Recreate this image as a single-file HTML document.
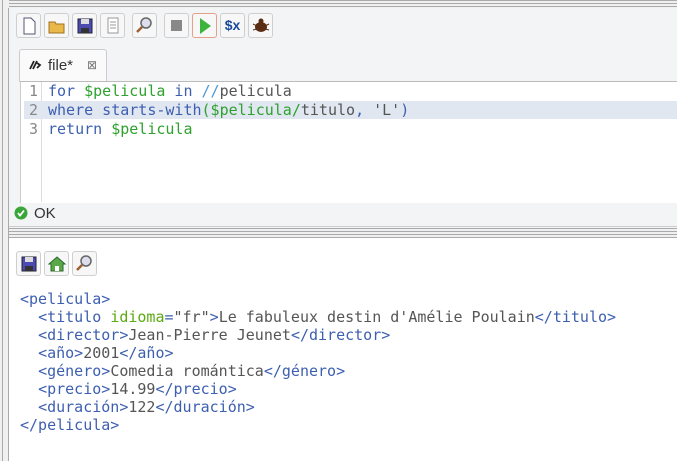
<!DOCTYPE html>
<html><head><style>
body{margin:0;width:677px;height:461px;background:#fff;position:relative;overflow:hidden;font-family:"Liberation Sans",sans-serif}
.a{position:absolute}
.btn{position:absolute;top:13px;width:23px;height:23px;border:1px solid #cfcfcf;border-radius:3px;background:#f7f7f7}
.mono{font-family:"DejaVu Sans Mono",monospace;font-size:15px;white-space:pre}
.k{color:#3d5fb0}.v{color:#2ea12e}.s{color:#4a9ad8}.t{color:#555}
.g{color:#3d5fb0}.x{color:#555}.at{color:#5aaa10}
</style></head><body>
<div class="a" style="left:0;top:0;width:677px;height:8px;background:repeating-linear-gradient(#aaa 0 1px,#f0f0f0 1px 3px)"></div>
<div class="a" style="left:0;top:0;width:9px;height:461px;background:#f0f0f0"></div>
<div class="a" style="left:2px;top:0;width:1px;height:461px;background:#aaa"></div>
<div class="a" style="left:8px;top:8px;width:1px;height:453px;background:#aaa"></div>
<div class="a" style="left:9px;top:8px;width:668px;height:220px;background:#f3f4f6"></div>
<div class="a" style="left:9px;top:228px;width:668px;height:10px;background:repeating-linear-gradient(#aaa 0 1px,#f0f0f0 1px 3px)"></div>
<div class="btn" style="left:16px"><svg width="23" height="23"><path d="M7 4h7l4 4v12H7z" fill="#fff" stroke="#557"/></svg></div>
<div class="btn" style="left:44px"><svg width="23" height="23"><path d="M4 8h6l1 2h8v9H4z" fill="#e8b84a" stroke="#a07020"/></svg></div>
<div class="btn" style="left:72px"><svg width="23" height="23"><rect x="5" y="5" width="14" height="14" fill="#4a4ab0" stroke="#223"/><rect x="8" y="5" width="8" height="5" fill="#ddd"/><rect x="8" y="14" width="8" height="5" fill="#333"/></svg></div>
<div class="btn" style="left:100px"><svg width="23" height="23"><rect x="7" y="4" width="10" height="15" fill="#fff" stroke="#999"/><path d="M9 8h6M9 11h6M9 14h6" stroke="#999"/></svg></div>
<div class="btn" style="left:132px"><svg width="23" height="23"><circle cx="13" cy="9" r="5" fill="#dde" stroke="#666" stroke-width="1.5"/><path d="M9 13l-5 5" stroke="#a06030" stroke-width="2.5"/></svg></div>
<div class="btn" style="left:164px"><svg width="23" height="23"><rect x="6" y="6" width="11" height="11" fill="#888"/></svg></div>
<div class="btn" style="left:192px;border-color:#e5a08a"><svg width="23" height="23"><path d="M7 4l11 8-11 8z" fill="#3cb43c"/></svg></div>
<div class="btn" style="left:220px;font:bold 14px 'Liberation Sans';color:#1a4a9a;text-align:center;line-height:23px">$x</div>
<div class="btn" style="left:248px"><svg width="23" height="23"><ellipse cx="12" cy="13" rx="6" ry="5" fill="#5a2c14"/><circle cx="12" cy="7" r="2.5" fill="#5a2c14"/><path d="M4 10l4 2M4 16l4-1M20 10l-4 2M20 16l-4-1" stroke="#5a2c14"/></svg></div>
<div class="a" style="left:19px;top:49px;width:86px;height:32px;background:#fafafa;border:1px solid #ccc;border-bottom:none;border-radius:3px 3px 0 0"></div>
<svg class="a" style="left:28px;top:59px" width="14" height="12"><path d="M2 10l4-8M5 10l4-8M9 4l3 2-3 3" stroke="#222" stroke-width="1.8" fill="none"/></svg>
<div class="a" style="left:48px;top:57px;font-size:15px;color:#333">file*</div>
<div class="a" style="left:87px;top:58px;font-size:12px;color:#777">⊠</div>
<div class="a" style="left:20px;top:81px;width:657px;height:121px;background:#fff;border-top:1px solid #bbb;border-left:1px solid #ccc"></div>
<div class="a" style="left:41px;top:82px;width:1px;height:120px;background:#ddd"></div>
<div class="a" style="left:24px;top:101px;width:653px;height:18px;background:#e0e7f1"></div>
<div class="a mono" style="left:29px;top:82px;line-height:19px;color:#888">1
2
3</div>
<div class="a mono" style="left:48px;top:82px;line-height:19px"><span class="k">for </span><span class="v">$pelicula</span><span class="k"> in </span><span class="s">//</span><span class="t">pelicula</span>
<span class="k">where starts-with</span><span class="v">($pelicula/</span><span class="t">titulo</span><span class="k">, </span><span class="t">'L'</span><span class="k">)</span>
<span class="k">return </span><span class="v">$pelicula</span></div>
<div class="a" style="left:9px;top:226px;width:668px;height:1px;background:#ccc"></div>
<svg class="a" style="left:14px;top:206px" width="14" height="14"><circle cx="7" cy="7" r="6.5" fill="#3aa63a"/><path d="M4 7l2 2.5 4-5" stroke="#fff" stroke-width="1.8" fill="none"/></svg>
<div class="a" style="left:34px;top:205px;font-size:15px;color:#333">OK</div>
<div class="btn" style="left:16px;top:251px"><svg width="23" height="23"><rect x="5" y="5" width="14" height="14" fill="#4a4ab0" stroke="#223"/><rect x="8" y="5" width="8" height="5" fill="#ddd"/><rect x="8" y="14" width="8" height="5" fill="#333"/></svg></div>
<div class="btn" style="left:44px;top:251px"><svg width="23" height="23"><path d="M4 12l8-7 8 7h-2v7H6v-7z" fill="#5aa84a" stroke="#2a6a2a"/><rect x="10" y="14" width="4" height="5" fill="#fff"/></svg></div>
<div class="btn" style="left:72px;top:251px"><svg width="23" height="23"><circle cx="13" cy="9" r="5" fill="#dde" stroke="#666" stroke-width="1.5"/><path d="M9 13l-5 5" stroke="#a06030" stroke-width="2.5"/></svg></div>
<div class="a mono" style="left:20px;top:290px;line-height:18px"><span class="g">&lt;pelicula&gt;</span>
  <span class="g">&lt;titulo </span><span class="at">idioma</span><span class="g">=</span><span class="x">"fr"</span><span class="g">&gt;</span><span class="x">Le fabuleux destin d'Amélie Poulain</span><span class="g">&lt;/titulo&gt;</span>
  <span class="g">&lt;director&gt;</span><span class="x">Jean-Pierre Jeunet</span><span class="g">&lt;/director&gt;</span>
  <span class="g">&lt;año&gt;</span><span class="x">2001</span><span class="g">&lt;/año&gt;</span>
  <span class="g">&lt;género&gt;</span><span class="x">Comedia romántica</span><span class="g">&lt;/género&gt;</span>
  <span class="g">&lt;precio&gt;</span><span class="x">14.99</span><span class="g">&lt;/precio&gt;</span>
  <span class="g">&lt;duración&gt;</span><span class="x">122</span><span class="g">&lt;/duración&gt;</span>
<span class="g">&lt;/pelicula&gt;</span></div>
</body></html>
